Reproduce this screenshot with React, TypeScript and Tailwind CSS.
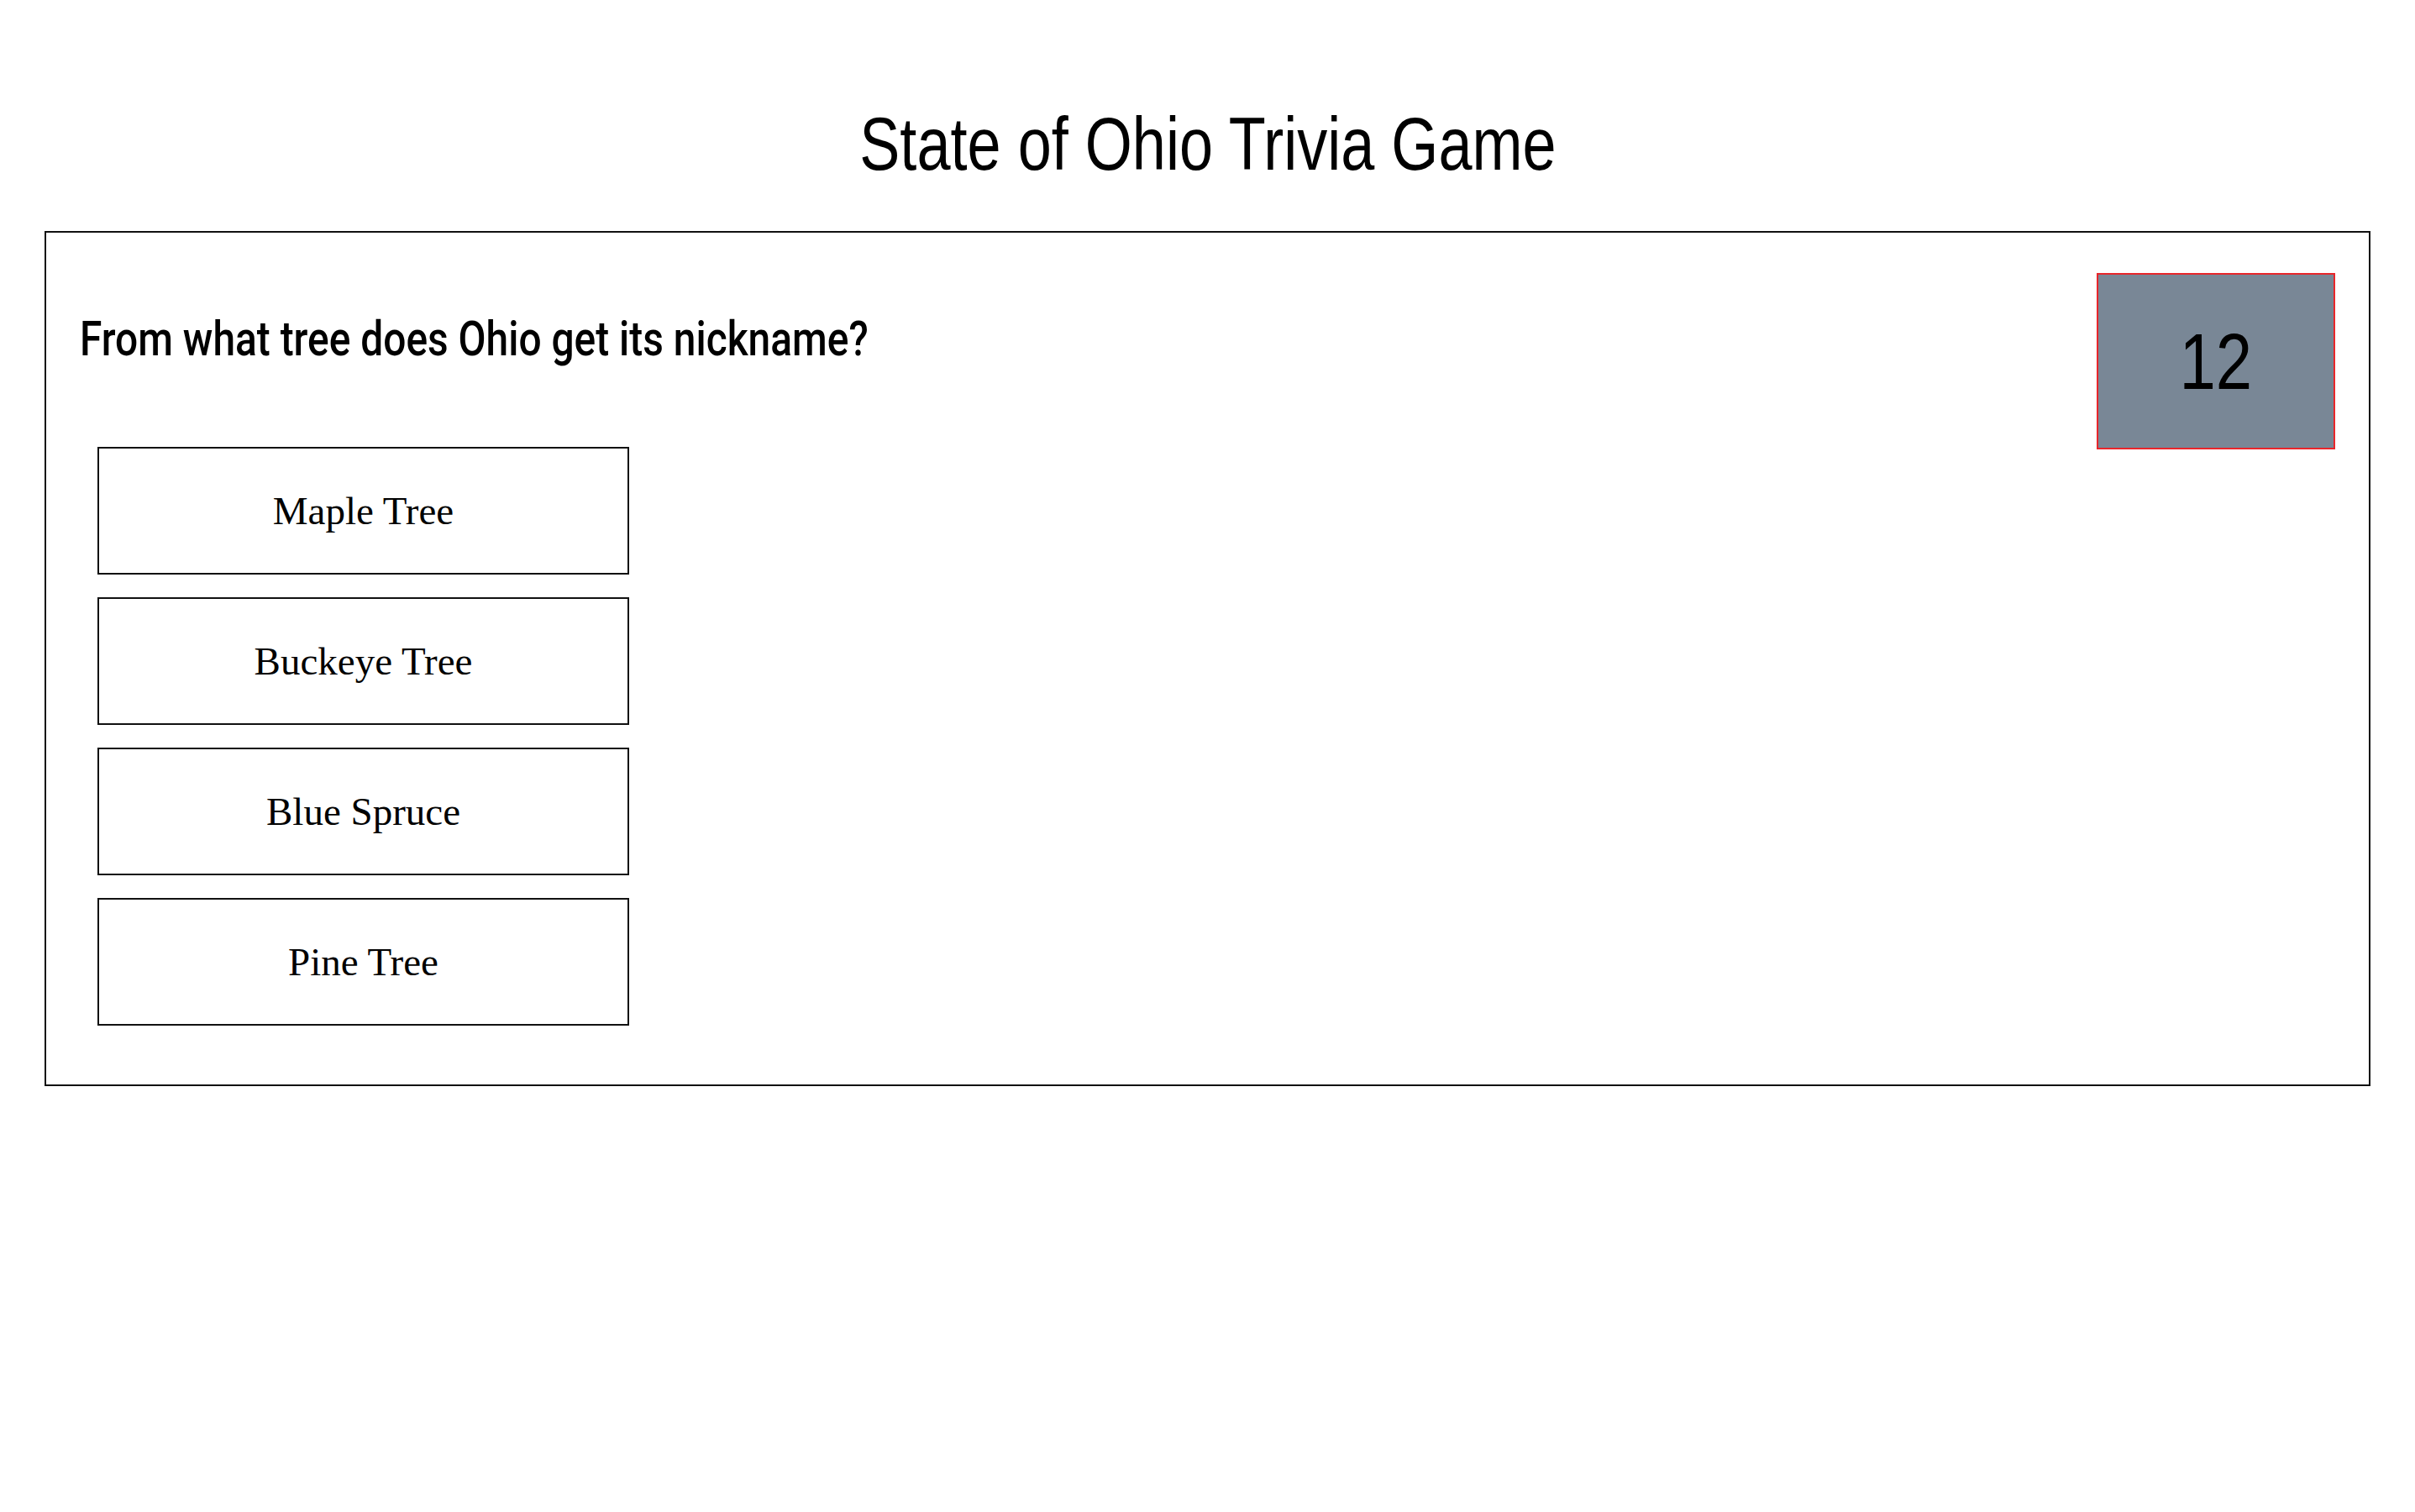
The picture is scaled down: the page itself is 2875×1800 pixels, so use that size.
import React from 'react';

const ANSWERS = ['Maple Tree', 'Buckeye Tree', 'Blue Spruce', 'Pine Tree'];

export default function App() {
  return (
    <div className="min-h-screen w-full bg-white text-black">
      <div className="pt-[121px] flex justify-center">
        <h1 className="scale-x-[0.81] text-[89px] leading-[100px] font-normal font-['Liberation_Sans',sans-serif]">
          State of Ohio Trivia Game
        </h1>
      </div>

      <div className="mx-[53px] mt-[54px] flex items-start justify-between border-2 border-[#111]">
        {/* question + answers */}
        <div className="flex flex-col pl-[40px] pt-[95px] pb-[70px]">
          <h2 className="origin-left scale-x-[0.84] whitespace-nowrap text-[57px] leading-[64px] font-medium font-['Roboto',sans-serif]">
            From what tree does Ohio get its nickname?
          </h2>
          <div className="ml-[21px] mt-[96px] flex flex-col gap-[27px]">
            {ANSWERS.map((a) => (
              <button
                key={a}
                className="flex h-[152px] w-[633px] items-center justify-center border-2 border-[#111] bg-white text-[47px] font-['Liberation_Serif',serif]"
              >
                {a}
              </button>
            ))}
          </div>
        </div>

        {/* timer */}
        <div className="mt-[48px] mr-[40px] flex h-[210px] w-[284px] items-center justify-center border-2 border-[#e8262b] bg-[#798796]">
          <span className="scale-x-[0.82] text-[95px] leading-none font-['Liberation_Sans',sans-serif]">12</span>
        </div>
      </div>
    </div>
  );
}
